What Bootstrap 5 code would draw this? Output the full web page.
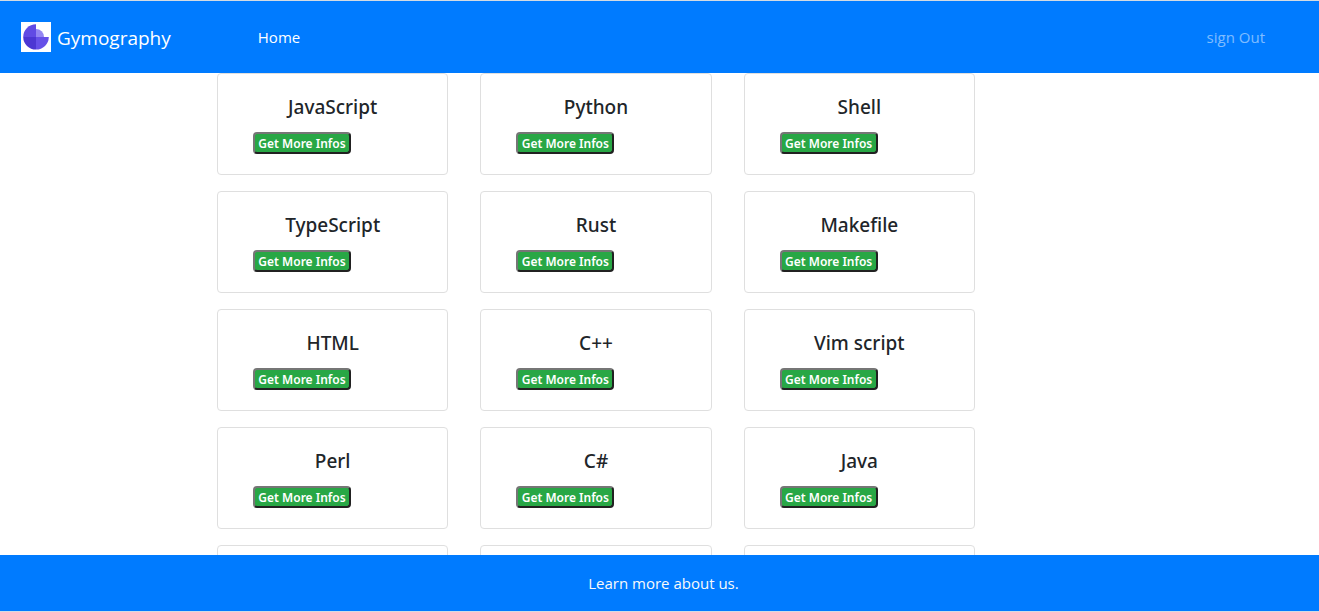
<!DOCTYPE html>
<html lang="en">
<head>
<meta charset="utf-8">
<meta name="viewport" content="width=device-width, initial-scale=1">
<title>Gymography</title>
<link href="https://cdn.jsdelivr.net/npm/bootstrap@5.3.0/dist/css/bootstrap.min.css" rel="stylesheet">
<style>
  body { font-family: "Open Sans", "Noto Sans", sans-serif; font-size: 15px; border-top: 1px solid #d3dbe3; border-bottom: 1px solid #d3dbe3; }
  .bar-blue { background: #007bff; }
  .top-bar { height: 72px; padding: 0 54px 0 21px; }
  .navbar-brand { gap: 6px; }
  .brand-text { font-size: 19px; padding-top: 2px; }
  .home-link { margin-left: 87px; }
  .languages { padding: 0 344px 0 217px; }
  .languages .row { --bs-gutter-x: 32px; --bs-gutter-y: 16px; }
  .lang-card { height: 102px; border-color: #dfdfdf; border-radius: 4px; padding: 21px 35px 0; }
  .lang-card h5 { font-family: "Noto Sans", "Open Sans", sans-serif; font-weight: 500; font-size: 19px; line-height: 24px; margin-bottom: 13px; color: #212529; }
  .info-btn { width: 98px; height: 22px; padding: 1px 0 0; border: 2px solid; border-color: #767676 #212121 #212121 #767676; border-radius: 4px; background: #28a745; color: #fff; font-family: "Noto Sans", "Open Sans", sans-serif; font-size: 12px; font-weight: 600; line-height: 17px; white-space: nowrap; }
  .foot { height: 56px; padding-left: 8px; }
</style>
</head>
<body class="d-flex flex-column vh-100 overflow-hidden">
<nav class="navbar navbar-dark bar-blue top-bar flex-nowrap flex-shrink-0 justify-content-start">
  <a class="navbar-brand d-flex align-items-center m-0 p-0" href="#">
    <svg width="30" height="30" viewBox="0 0 30 30" aria-hidden="true">
      <path fill="#fff" d="M0 0h30v30H0z"/>
      <path fill="#614be4" d="M15 2.2A12.8 12.8 0 0 0 2.2 15H15z"/>
      <path fill="#4c37d3" d="M2.2 15A12.8 12.8 0 0 0 15 27.6V15z"/>
      <path fill="#6650e8" d="M15 15v12.6A12.8 12.8 0 0 0 27.8 15z"/>
      <path fill="#9486f2" d="M15 7a8 8 0 0 1 8 8h-8z"/>
    </svg>
    <span class="brand-text">Gymography</span>
  </a>
  <a class="nav-link text-white home-link" href="#">Home</a>
  <a class="nav-link text-white text-opacity-50 ms-auto" href="#">sign Out</a>
</nav>
<main class="languages flex-grow-1 overflow-hidden">
  <div class="row row-cols-3 mt-0">
    <div class="col mt-0"><div class="card lang-card"><h5 class="text-center">JavaScript</h5><button type="button" class="info-btn">Get More Infos</button></div></div>
    <div class="col mt-0"><div class="card lang-card"><h5 class="text-center">Python</h5><button type="button" class="info-btn">Get More Infos</button></div></div>
    <div class="col mt-0"><div class="card lang-card"><h5 class="text-center">Shell</h5><button type="button" class="info-btn">Get More Infos</button></div></div>
    <div class="col"><div class="card lang-card"><h5 class="text-center">TypeScript</h5><button type="button" class="info-btn">Get More Infos</button></div></div>
    <div class="col"><div class="card lang-card"><h5 class="text-center">Rust</h5><button type="button" class="info-btn">Get More Infos</button></div></div>
    <div class="col"><div class="card lang-card"><h5 class="text-center">Makefile</h5><button type="button" class="info-btn">Get More Infos</button></div></div>
    <div class="col"><div class="card lang-card"><h5 class="text-center">HTML</h5><button type="button" class="info-btn">Get More Infos</button></div></div>
    <div class="col"><div class="card lang-card"><h5 class="text-center">C++</h5><button type="button" class="info-btn">Get More Infos</button></div></div>
    <div class="col"><div class="card lang-card"><h5 class="text-center">Vim script</h5><button type="button" class="info-btn">Get More Infos</button></div></div>
    <div class="col"><div class="card lang-card"><h5 class="text-center">Perl</h5><button type="button" class="info-btn">Get More Infos</button></div></div>
    <div class="col"><div class="card lang-card"><h5 class="text-center">C#</h5><button type="button" class="info-btn">Get More Infos</button></div></div>
    <div class="col"><div class="card lang-card"><h5 class="text-center">Java</h5><button type="button" class="info-btn">Get More Infos</button></div></div>
    <div class="col"><div class="card lang-card"></div></div>
    <div class="col"><div class="card lang-card"></div></div>
    <div class="col"><div class="card lang-card"></div></div>
  </div>
</main>
<footer class="bar-blue foot d-flex flex-shrink-0 align-items-center justify-content-center">
  <a class="text-light text-decoration-none" href="#">Learn more about us.</a>
</footer>
<script src="https://cdn.jsdelivr.net/npm/bootstrap@5.3.0/dist/js/bootstrap.bundle.min.js"></script>
</body>
</html>
